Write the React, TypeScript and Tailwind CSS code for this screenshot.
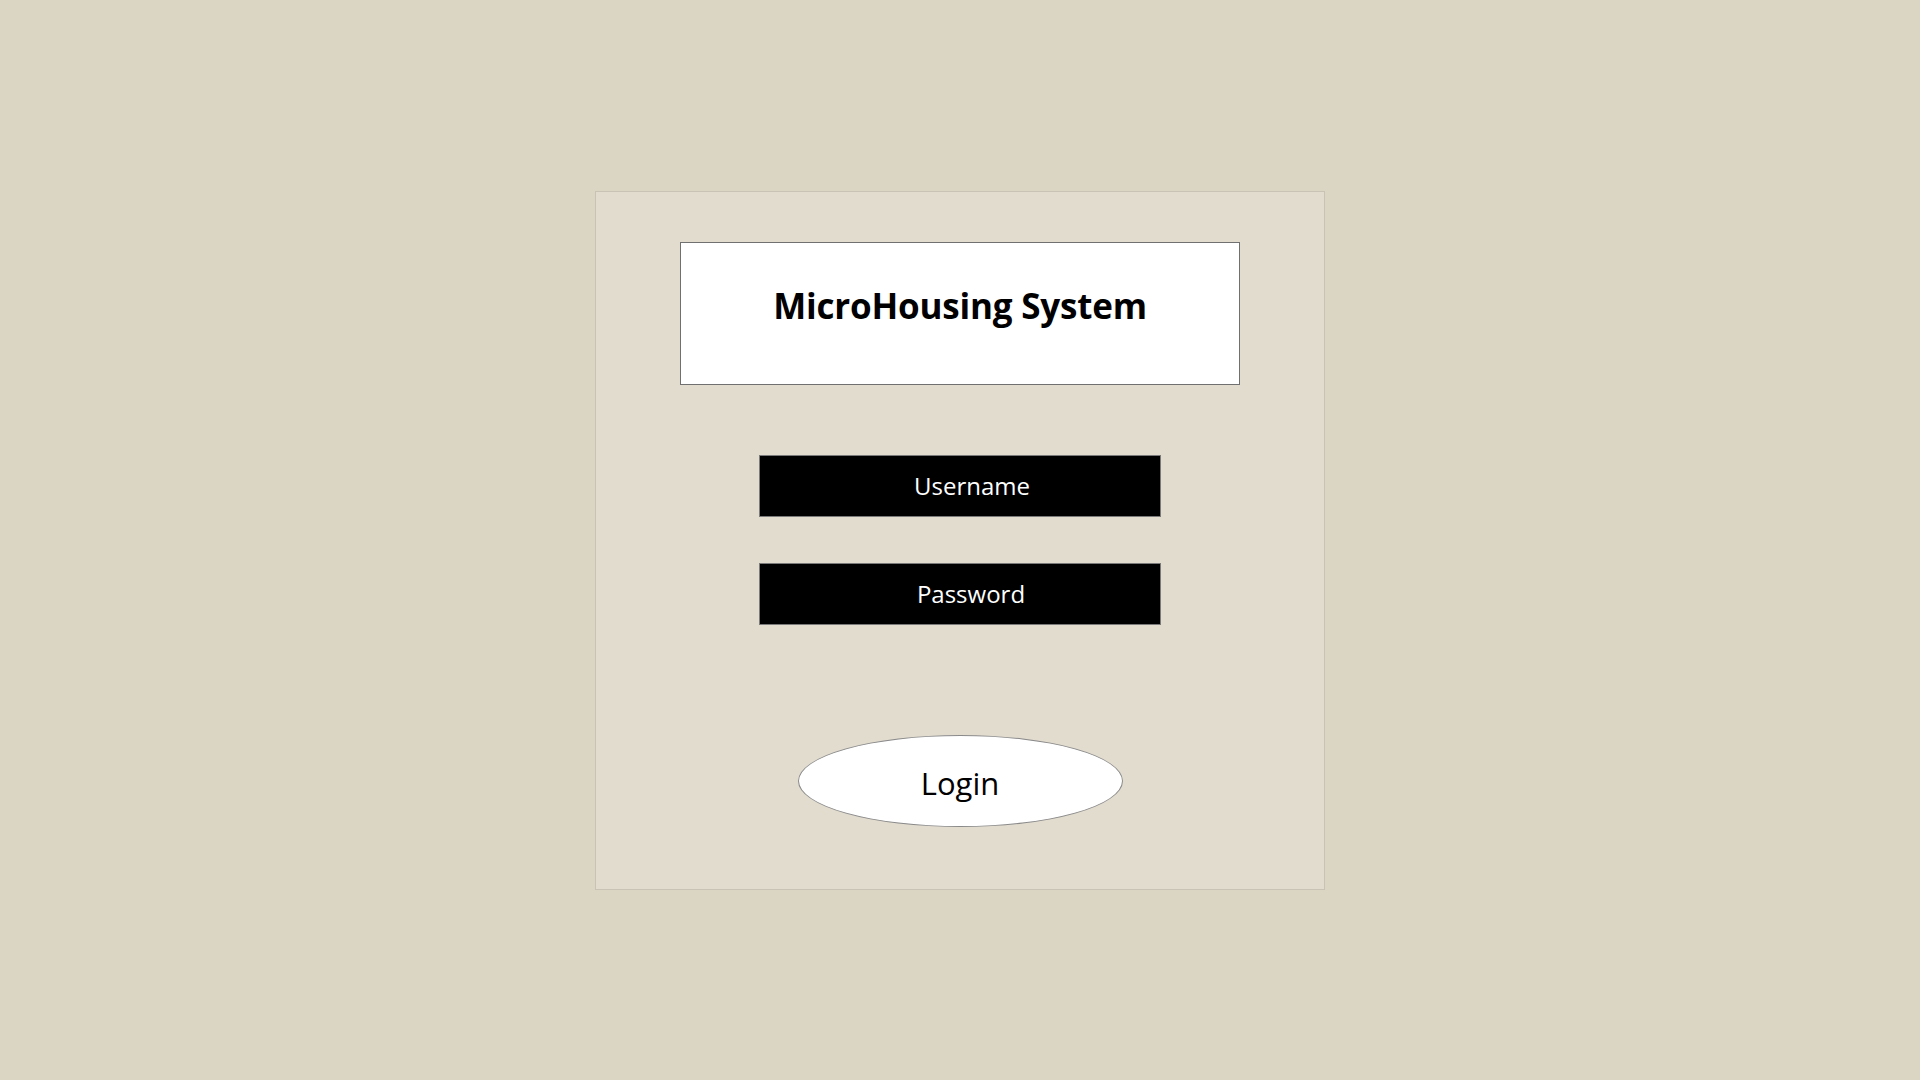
import React from "react";

export default function App() {
  return (
    <div
      className="min-h-screen w-full bg-[#dbd6c3] flex items-center justify-center"
      style={{ fontFamily: '"Open Sans", "Noto Sans", sans-serif' }}
    >
      {/* Login card */}
      <div className="w-[730px] h-[699px] bg-[#e2dccf] border border-[#c9c3b5] flex flex-col items-center pt-[50px]">
        <div className="w-[560px] h-[143px] bg-white border border-[#707070] flex items-center justify-center pb-[14px]">
          <h1 className="text-[35px] font-bold text-black tracking-[-0.2px]">MicroHousing System</h1>
        </div>

        <div className="mt-[70px] w-[402px] h-[62px] bg-black border border-[#7a7a7a] flex items-center justify-center pl-[24px]">
          <span className="text-[24px] text-white">Username</span>
        </div>

        <div className="mt-[46px] w-[402px] h-[62px] bg-black border border-[#7a7a7a] flex items-center justify-center pl-[22px]">
          <span className="text-[24px] text-white">Password</span>
        </div>

        <button
          type="button"
          className="mt-[110px] w-[325px] h-[92px] bg-white border border-[#8a8a8a] rounded-[50%] flex items-center justify-center pt-[6px]"
        >
          <span className="text-[31px] text-black">Login</span>
        </button>
      </div>
    </div>
  );
}
